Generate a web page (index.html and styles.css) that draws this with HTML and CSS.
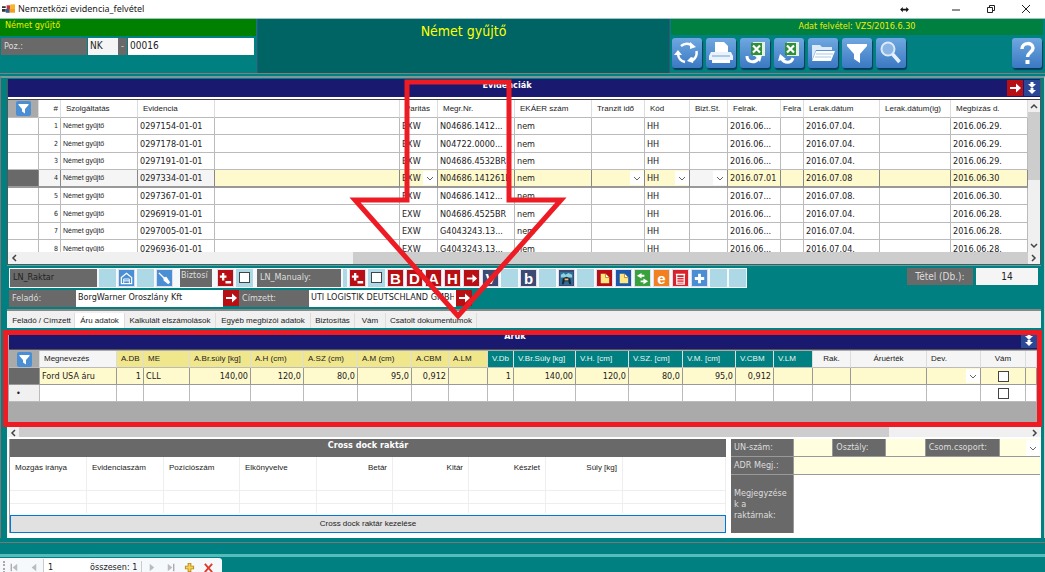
FILE: index.html
```html
<!DOCTYPE html>
<html lang="hu">
<head>
<meta charset="utf-8">
<title>Nemzetközi evidencia_felvétel</title>
<link rel="stylesheet" href="styles.css">
</head>
<body>
<svg class="defs" aria-hidden="true">
  <symbol id="funnel" viewBox="0 0 30 30"><path d="M5 6h20v2l-7 8v9l-6-4v-5L5 8z" fill="#fff"/></symbol>
  <symbol id="go" viewBox="0 0 16 16"><path d="M3 8h8" stroke="#fff" stroke-width="2"/><path d="M9 3.500l5 4.500-5 4.500z" fill="#fff"/></symbol>
  <symbol id="down" viewBox="0 0 16 16"><path d="M8 2v3M8 8v3" stroke="#fff" stroke-width="3"/><path d="M4 4h8L8 8zM4 10h8l-4 4z" fill="#fff"/></symbol>
  <symbol id="plusminus" viewBox="0 0 16 16"><path d="M2 6h7M5.500 2v8M8 12h6" stroke="#fff" stroke-width="2.500"/></symbol>
  <symbol id="excel" viewBox="0 0 30 30"><path d="M13 4h12v14H13z" fill="#e2f2dc"/><path d="M11 5h11v12H11z" fill="#2f8f3c"/><path d="M13 7.500l7 7M20 7.500l-7 7" stroke="#fff" stroke-width="2.200"/></symbol>
</svg>

<header class="titlebar">
  <svg class="app-icon" viewBox="0 0 14 12"><path d="M0 3h4v2H0zM0 6h4v3H0z" fill="#333"/><path d="M5 2h4v4H5z" fill="#c33"/><path d="M9 1h5v5H9z" fill="#f7b52c"/><path d="M5 6h9v4H5z" fill="#f0a020"/><path d="M4 6h4v4H4z" fill="#345da8"/></svg>
  <h1>Nemzetközi evidencia_felvétel</h1>
  <svg class="dots" viewBox="0 0 10 8"><path d="M0 4l3-3v2h4V1l3 3-3 3V5H3v2z" fill="#111"/></svg>
  <button class="win" aria-label="Kis méret"><svg viewBox="0 0 10 10"><path d="M1 6h8" stroke="#222"/></svg></button>
  <button class="win" aria-label="Előző méret"><svg viewBox="0 0 10 10"><path d="M1.500 3.500h5v5h-5zM3.500 3V1.500h5v5H7" fill="none" stroke="#222"/></svg></button>
  <button class="win" aria-label="Bezárás"><svg viewBox="0 0 10 10"><path d="M1 1l8 8M9 1L1 9" stroke="#222"/></svg></button>
</header>

<section class="top">
  <div class="top-left">
    <div class="kind">Német gyűjtő</div>
    <div class="poz">
      <label class="tag" for="poz1">Poz.:</label>
      <input id="poz1" class="poz-a" value="NK">
      <span class="dash">-</span>
      <input class="poz-b" aria-label="Pozíciószám" value="00016">
    </div>
  </div>
  <div class="top-mid">Német gyűjtő</div>
  <div class="top-right">
    <div class="stamp">Adat felvétel: VZS/2016.6.30</div>
    <div class="tools">
      <button class="tool" aria-label="Frissítés"><svg viewBox="0 0 30 30"><g fill="none" stroke="#fff" stroke-width="2.500"><path d="M9 8a9 9 0 0 1 10-1"/><path d="M24.500 13a9.500 9.500 0 0 1-5 10"/><path d="M13 24a9 9 0 0 1-7-8"/></g><path d="M18 4l6 5-6 2zM22 20l-1 5-6-2 4-4zM2 17l4-5 4 5z" fill="#fff"/></svg></button>
      <button class="tool" aria-label="Nyomtatás"><svg viewBox="0 0 30 30"><path d="M9 4h9l4 4v6H9z" fill="#fff"/><path d="M5 14h20l2 4v4H3v-4z" fill="#eaf2fb"/><path d="M6 18h18" stroke="#6fa0d6"/><path d="M6 22h18v3H6z" fill="#fff"/></svg></button>
      <button class="tool" aria-label="Excel betöltés"><svg viewBox="0 0 30 30"><use href="#excel"/><path d="M7 18c0 7 8 7 11 3" fill="none" stroke="#fff" stroke-width="3"/><path d="M15 18l7-1-2 7z" fill="#fff"/></svg></button>
      <button class="tool" aria-label="Excel mentés"><svg viewBox="0 0 30 30"><use href="#excel"/><path d="M19 20c-2 6-9 5-11 1" fill="none" stroke="#fff" stroke-width="3"/><path d="M4 23l2-7 6 5z" fill="#fff"/></svg></button>
      <button class="tool" aria-label="Megnyitás"><svg viewBox="0 0 30 30"><path d="M4 22V7h8l2 2h10v3H8z" fill="#dceaf8"/><path d="M8 13h19l-4 10H4z" fill="#fff"/><path d="M8 16h17M7 19h16" stroke="#a8c9ea"/></svg></button>
      <button class="tool" aria-label="Szűrés"><svg><use href="#funnel"/></svg></button>
      <button class="tool" aria-label="Keresés"><svg viewBox="0 0 30 30"><circle cx="12" cy="11" r="6.500" fill="#8ab6e6" stroke="#dbe9f8" stroke-width="2"/><path d="M16.500 16l7 8" stroke="#e8f1fb" stroke-width="3.500"/></svg></button>
      <button class="tool help" aria-label="Súgó"><svg viewBox="0 0 30 30"><path d="M10 11c0-7 11-7 11-1 0 4-5.500 4.500-5.500 9" fill="none" stroke="#fff" stroke-width="3.500"/><path d="M13.500 22h4v4h-4z" fill="#fff"/></svg></button>
    </div>
  </div>
</section>

<main>
  <section class="grid-panel">
    <div class="bar"><h2>Evidenciák</h2>
      <button class="sq red" aria-label="Ugrás"><svg><use href="#go"/></svg></button>
      <button class="sq navy" aria-label="Lenyitás"><svg><use href="#down"/></svg></button>
    </div>
    <div class="scrollbox">
      <div class="clip">
      <table class="ev">
        <colgroup><col class="w31"><col class="w22"><col class="w77"><col class="w77"><col><col class="w38"><col class="w77"><col class="w77"><col class="w53"><col class="w45"><col class="w38"><col class="w53"><col class="w23"><col class="w76"><col class="w71"><col class="w77"></colgroup>
        <thead><tr><th class="corner"><button class="filter" aria-label="Szűrő"><svg><use href="#funnel"/></svg></button></th><th class="n">#</th><th>Szolgáltatás</th><th>Evidencia</th><th></th><th>Paritás</th><th>Megr.Nr.</th><th>EKÁER szám</th><th>Tranzit idő</th><th>Kód</th><th>Bizt.St.</th><th>Felrak.</th><th class="tight">Felra</th><th>Lerak.dátum</th><th>Lerak.dátum(ig)</th><th>Megbízás d.</th></tr></thead>
        <tbody>
        <tr><td></td><td class="n">1</td><td class="s">Német gyűjtő</td><td>0297154-01-01</td><td></td><td>EXW</td><td>N04686.1412...</td><td>nem</td><td></td><td>HH</td><td></td><td>2016.06...</td><td></td><td>2016.07.04.</td><td></td><td>2016.06.29.</td></tr>
        <tr><td></td><td class="n">2</td><td class="s">Német gyűjtő</td><td>0297178-01-01</td><td></td><td>EXW</td><td>N04722.0000...</td><td>nem</td><td></td><td>HH</td><td></td><td>2016.06...</td><td></td><td>2016.07.04.</td><td></td><td>2016.06.29.</td></tr>
        <tr><td></td><td class="n">3</td><td class="s">Német gyűjtő</td><td>0297191-01-01</td><td></td><td>EXW</td><td>N04686.4532BR</td><td>nem</td><td></td><td>HH</td><td></td><td>2016.06...</td><td></td><td>2016.07.04.</td><td></td><td>2016.06.29.</td></tr>
        <tr class="current"><td class="mark"></td><td class="n ro">4</td><td class="s ro">Német gyűjtő</td><td class="ro">0297334-01-01</td><td></td><td class="pick"><select aria-label="Paritás"><option>EXW</option></select></td><td>N04686.141261B</td><td>nem</td><td class="pick"><select aria-label="Tranzit idő"><option></option></select></td><td class="pick"><select aria-label="Kód"><option>HH</option></select></td><td class="pick ro"><select aria-label="Bizt.St."><option></option></select></td><td>2016.07.01</td><td></td><td>2016.07.08</td><td></td><td>2016.06.30</td></tr>
        <tr><td></td><td class="n">5</td><td class="s">Német gyűjtő</td><td>0297367-01-01</td><td></td><td>EXW</td><td>N04686.1412...</td><td>nem</td><td></td><td>HH</td><td></td><td>2016.07...</td><td></td><td>2016.07.08.</td><td></td><td>2016.06.30.</td></tr>
        <tr><td></td><td class="n">6</td><td class="s">Német gyűjtő</td><td>0296919-01-01</td><td></td><td>EXW</td><td>N04686.4525BR</td><td>nem</td><td></td><td>HH</td><td></td><td>2016.06...</td><td></td><td>2016.07.04.</td><td></td><td>2016.06.28.</td></tr>
        <tr><td></td><td class="n">7</td><td class="s">Német gyűjtő</td><td>0297005-01-01</td><td></td><td>EXW</td><td>G4043243.13...</td><td>nem</td><td></td><td>HH</td><td></td><td>2016.06...</td><td></td><td>2016.07.04.</td><td></td><td>2016.06.28.</td></tr>
        <tr><td></td><td class="n">8</td><td class="s">Német gyűjtő</td><td>0296936-01-01</td><td></td><td>EXW</td><td>G4043243.13...</td><td>nem</td><td></td><td>HH</td><td></td><td>2016.06...</td><td></td><td>2016.07.04.</td><td></td><td>2016.06.28.</td></tr>
        </tbody>
      </table>
      </div>
      <div class="vscroll"><svg viewBox="0 0 12 12"><path d="M3 8l3-3 3 3" fill="none" stroke="#444" stroke-width="1.500"/></svg><i></i><svg viewBox="0 0 12 12"><path d="M3 4l3 3 3-3" fill="none" stroke="#444" stroke-width="1.500"/></svg></div>
    </div>
    <div class="hscroll one"><svg viewBox="0 0 12 12"><path d="M8 3L5 6l3 3" fill="none" stroke="#444" stroke-width="1.500"/></svg><i></i><svg viewBox="0 0 12 12"><path d="M4 3l3 3-3 3" fill="none" stroke="#444" stroke-width="1.500"/></svg></div>
  </section>

  <section class="mid">
    <div class="strip-row">
      <div class="strip">
        <span class="tag dark w87">LN_Raktar</span>
        <span class="cell"></span>
        <button class="cell blue" aria-label="Raktár"><svg viewBox="0 0 16 16"><path d="M2.500 7L8 2.500 13.500 7v6.500h-11z" fill="none" stroke="#fff" stroke-width="1.300"/><path d="M5 13V8.500h6V13M5 10.500h6" fill="none" stroke="#fff"/></svg></button>
        <span class="cell"></span>
        <button class="cell blue" aria-label="Törlés"><svg viewBox="0 0 16 16"><path d="M2 2l6 6" stroke="#fff" stroke-width="1.500"/><path d="M7 7l3-1 4 6-2 2-5-4z" fill="#fff"/></svg></button>
        <span class="tag w32">Biztosí</span>
        <button class="cell red" aria-label="Biztosítás"><svg><use href="#plusminus"/></svg></button>
        <span class="cell"><input type="checkbox" aria-label="Biztosítva"></span>
        <span class="tag w84">LN_Manualy:</span>
        <span class="cell thin"></span>
        <button class="cell red" aria-label="Manuális"><svg><use href="#plusminus"/></svg></button>
        <span class="cell"><input type="checkbox" aria-label="Manuálisan"></span>
        <button class="cell red">B</button>
        <button class="cell red">D</button>
        <button class="cell red">A</button>
        <button class="cell red">H</button>
        <button class="cell red" aria-label="Tovább"><svg><use href="#go"/></svg></button>
        <button class="cell slate">V</button>
        <span class="cell"></span>
        <button class="cell slate">b</button>
        <span class="cell"></span>
        <button class="cell slate" aria-label="Jármű"><svg viewBox="0 0 16 16"><path d="M1 1h14v14H1z" fill="#2d6e96"/><path d="M2 4l3-2 2 2 3-2 4 2v3H2z" fill="#8ed0e0"/><path d="M3 14l1-6 4-2 4 2 1 6h-2l-1-3H6l-1 3z" fill="#162838"/><path d="M6 8h4v2H6z" fill="#f4b36a"/></svg></button>
        <span class="cell"></span>
        <button class="cell red" aria-label="Jegyzet"><svg viewBox="0 0 16 16"><path d="M4 3h5l4 4v6H4z" fill="#ffe680"/><path d="M9 3v4h4" fill="#fff" stroke="#b98c20"/></svg></button>
        <button class="cell royal" aria-label="Másolat"><svg viewBox="0 0 16 16"><path d="M4 3h5l4 4v6H4z" fill="#ffe680"/><path d="M9 3v4h4" fill="#fff" stroke="#b98c20"/></svg></button>
        <button class="cell green" aria-label="Csere"><svg viewBox="0 0 16 16"><path d="M7 2l-5 3 5 3V6h3V4H7zM9 8l5 3-5 3v-2H6v-2h3z" fill="#fff"/></svg></button>
        <button class="cell orange">e</button>
        <button class="cell crimson" aria-label="Kosár"><svg viewBox="0 0 16 16"><path d="M4 4h8v10H4zM3 3.500h10" fill="none" stroke="#fff" stroke-width="1.300"/><path d="M4 7h8M4 9.500h8M4 12h8" stroke="#fff"/></svg></button>
        <button class="cell blue" aria-label="Új"><svg viewBox="0 0 16 16"><path d="M8 3v10M3 8h10" stroke="#fff" stroke-width="3"/></svg></button>
        <span class="cell"></span>
        <span class="cell"></span>
      </div>
      <div class="count"><label class="tag" for="tetel">Tétel (Db.):</label><input id="tetel" value="14"></div>
    </div>
    <div class="parties">
      <label class="tag w67" for="felado">Feladó:</label><input id="felado" value="BorgWarner Oroszlány Kft"><button class="sq red" aria-label="Feladó megnyitása"><svg><use href="#go"/></svg></button>
      <label class="tag w70" for="cimzett">Címzett:</label><input id="cimzett" value="UTI LOGISTIK DEUTSCHLAND GMBH"><button class="sq red" aria-label="Címzett megnyitása"><svg><use href="#go"/></svg></button>
    </div>
  </section>

  <nav class="tabs"><button class="t66">Feladó / Címzett</button><button class="t50 on">Áru adatok</button><button class="t91">Kalkulált elszámolások</button><button class="t95">Egyéb megbízói adatok</button><button class="t44">Biztosítás</button><button class="t31">Vám</button><button class="t91">Csatolt dokumentumok</button></nav>

  <section class="goods">
    <div class="bar"><h2>Áruk</h2><button class="sq navy" aria-label="Lenyitás"><svg><use href="#down"/></svg></button></div>
    <table class="aru">
      <colgroup><col class="w31"><col><col class="w27"><col class="w46"><col class="w61"><col class="w53"><col class="w54"><col class="w54"><col class="w37"><col class="w39"><col class="w26"><col class="w62"><col class="w53"><col class="w54"><col class="w53"><col class="w38"><col class="w39"><col class="w38"><col class="w76"><col class="w54"><col class="w45"><col class="w11"></colgroup>
      <thead><tr><th class="corner"><button class="filter" aria-label="Szűrő"><svg><use href="#funnel"/></svg></button></th><th>Megnevezés</th><th class="k">A.DB</th><th class="k">ME</th><th class="k">A.Br.súly [kg]</th><th class="k">A.H (cm)</th><th class="k">A.SZ (cm)</th><th class="k">A.M (cm)</th><th class="k">A.CBM</th><th class="k">A.LM</th><th class="v">V.Db</th><th class="v">V.Br.Súly [kg]</th><th class="v">V.H. [cm]</th><th class="v">V.SZ. [cm]</th><th class="v">V.M. [cm]</th><th class="v">V.CBM</th><th class="v">V.LM</th><th class="c">Rak.</th><th class="c">Áruérték</th><th>Dev.</th><th class="c">Vám</th><th></th></tr></thead>
      <tbody>
      <tr class="filled"><td class="mark"></td><td>Ford USA áru</td><td class="r">1</td><td>CLL</td><td class="r">140,00</td><td class="r">120,0</td><td class="r">80,0</td><td class="r">95,0</td><td class="r">0,912</td><td></td><td class="r">1</td><td class="r">140,00</td><td class="r">120,0</td><td class="r">80,0</td><td class="r">95,0</td><td class="r">0,912</td><td></td><td></td><td></td><td class="pick"><select aria-label="Deviza"><option></option></select></td><td class="c"><input type="checkbox" aria-label="Vám"></td><td></td></tr>
      <tr><td class="new">•</td><td></td><td></td><td></td><td></td><td></td><td></td><td></td><td></td><td></td><td></td><td></td><td></td><td></td><td></td><td></td><td></td><td></td><td></td><td></td><td class="c"><input type="checkbox" aria-label="Vám, új sor"></td><td></td></tr>
      </tbody>
    </table>
  </section>
  <div class="hscroll two"><svg viewBox="0 0 12 12"><path d="M8 3L5 6l3 3" fill="none" stroke="#444" stroke-width="1.500"/></svg><i></i><svg viewBox="0 0 12 12"><path d="M4 3l3 3-3 3" fill="none" stroke="#444" stroke-width="1.500"/></svg></div>

  <section class="lower">
    <div class="dock">
      <h2>Cross dock raktár</h2>
      <table>
        <colgroup><col class="w77"><col class="w77"><col class="w76"><col class="w77"><col class="w76"><col class="w76"><col class="w77"><col class="w77"><col></colgroup>
        <thead><tr><th>Mozgás iránya</th><th>Evidenciaszám</th><th>Pozíciószám</th><th>Elkönyvelve</th><th class="r">Betár</th><th class="r">Kitár</th><th class="r">Készlet</th><th class="r">Súly [kg]</th><th></th></tr></thead>
        <tbody>
        <tr><td></td><td></td><td></td><td></td><td></td><td></td><td></td><td></td><td></td></tr>
        <tr><td></td><td></td><td></td><td></td><td></td><td></td><td></td><td></td><td></td></tr>
        <tr><td></td><td></td><td></td><td></td><td></td><td></td><td></td><td></td><td></td></tr>
        </tbody>
      </table>
      <button class="manage">Cross dock raktár kezelése</button>
    </div>
    <div class="adr">
      <div class="line"><label class="tag w62" for="un">UN-szám:</label><input id="un"><label class="tag w52" for="oszt">Osztály:</label><input id="oszt"><label class="tag w73" for="csom">Csom.csoport:</label><select id="csom"><option></option></select></div>
      <div class="line"><label class="tag w62" for="adr">ADR Megj.:</label><input id="adr"></div>
      <div class="line tall"><label class="tag w62" for="megj">Megjegyzések a raktárnak:</label><textarea id="megj"></textarea></div>
    </div>
  </section>
</main>

<footer>
  <div class="band"></div>
  <div class="pager">
    <span class="grip"></span>
    <button aria-label="Első"><svg viewBox="0 0 12 12"><path d="M2.500 2v8" stroke="#aaa" stroke-width="1.500"/><path d="M9 2v8L4 6z" fill="#bbb"/></svg></button>
    <button aria-label="Előző"><svg viewBox="0 0 12 12"><path d="M9 2v8L4 6z" fill="#bbb"/></svg></button>
    <input aria-label="Oldal" value="1">
    <span class="sum">összesen: 1</span>
    <button aria-label="Következő"><svg viewBox="0 0 12 12"><path d="M4 2v8l5-4z" fill="#bbb"/></svg></button>
    <button aria-label="Utolsó"><svg viewBox="0 0 12 12"><path d="M9.500 2v8" stroke="#aaa" stroke-width="1.500"/><path d="M3 2v8l5-4z" fill="#bbb"/></svg></button>
    <button class="sep" aria-label="Hozzáadás"><svg viewBox="0 0 12 12"><path d="M6 1v10M1 6h10" stroke="#b98a1c" stroke-width="4"/><path d="M6 2v8M2 6h8" stroke="#f6cf55" stroke-width="2"/></svg></button>
    <button aria-label="Eltávolítás"><svg viewBox="0 0 12 12"><path d="M2 2l8 9M10 2L2 11" stroke="#e0392b" stroke-width="2"/></svg></button>
  </div>
</footer>

<svg class="arrow" viewBox="0 0 220 250" aria-hidden="true"><path d="M58 125V7h102v118h52L109 241 6 125z" fill="none" stroke="#ed1c24" stroke-width="5"/></svg>
</body>
</html>
```
FILE: styles.css
```css
:root {
  --teal: #008080;
  --gray: #696969;
  --navy: #191970;
  --cream: #fffacd;
  --mark: #ed1c24;
  --text: "DejaVu Sans Condensed", "DejaVu Sans", sans-serif;
  --small: "Liberation Sans", Arial, sans-serif;
}
* { box-sizing: border-box; }
body {
  margin: 0;
  min-height: 100vh;
  display: flex;
  flex-direction: column;
  background: var(--teal);
  color: #222;
  font: 9px/12px var(--text);
  position: relative;
  overflow: hidden;
}
button, input, select, textarea { font: inherit; color: inherit; margin: 0; padding: 0; border: 0; border-radius: 0; min-width: 0; }
h1, h2 { margin: 0; font: inherit; }
svg { display: block; }
.defs { position: absolute; width: 0; height: 0; }

.titlebar { display: flex; align-items: center; height: 19px; padding: 0 14px 0 2px; background: #fff; border-bottom: 1px solid #9cc4c4; }
.titlebar h1 { margin: 0 auto 0 3px; font: 9px/12px "Noto Sans", sans-serif; }
.app-icon { width: 13px; height: 12px; }
.dots { width: 9px; height: 7px; margin-right: 42px; }
.win { background: none; width: 10px; margin-left: 25px; }
.dots + .win { margin-left: 0; }
.win svg { width: 10px; height: 10px; }

.top { display: grid; grid-template-columns: 256px 1fr 372px; column-gap: 1px; height: 55px; padding-right: 2px; border-bottom: 1px solid #808080; }
.kind { height: 17px; padding: 0 5px; background: #008000; color: #ee0; }
.poz { display: flex; padding: 2px 2px 0 1px; }
.poz .tag { width: 86px; }
.tag { background: var(--gray); color: #ddd; font: 9px/17px var(--text); padding: 0 3px; white-space: nowrap; overflow: hidden; }
.poz input { height: 17px; background: #f5f5f5; padding: 0 2px 3px; font-size: 10px; }
.poz-a { width: 30px; margin-left: 1px; }
.dash { width: 9px; text-align: center; background: var(--gray); color: #ddd; line-height: 17px; margin-right: 1px; }
.poz .poz-b { flex: 1; background: #fff; }
.top-mid { background: #006464; border-left: 1px solid #357; border-right: 1px solid #357; color: #ff0; font-size: 14px; line-height: 24px; text-align: center; }
.stamp { height: 16px; background: #008040; color: #ee0; line-height: 15px; text-align: center; }
.tools { display: flex; gap: 4px; padding: 3px 1px 0; }
.tool { width: 30px; height: 30px; border-radius: 3px; background: linear-gradient(#6fa8e0, #3a78c2); box-shadow: 1px 2px 1px #063c5c; }
.tool svg { width: 30px; height: 30px; }
.help { margin-left: auto; }

main { margin-top: 2px; padding: 1px 3px 0 6px; border-top: 2px solid #799; border-left: 1px solid #777; border-right: 1px solid #ccc; }
.bar { display: flex; align-items: center; background: var(--navy); color: #fff; height: 18px; }
.bar h2 { flex: 1; align-self: flex-start; text-align: center; font-weight: bold; line-height: 12px; }
.sq { width: 16px; height: 16px; flex: none; }
.sq svg, .cell svg { width: 16px; height: 16px; }
.red { background: #b80f14; color: #fff; }
.navy { background: #2c4796; }
.grid-panel { background: #fff; border: 1px solid #555; border-top: 0; }
.grid-panel .sq { margin-left: 1px; }
.scrollbox { display: flex; border-top: 1px solid #444; margin-top: 2px; height: 153px; }
.clip { flex: 1; overflow: hidden; }
table { border-collapse: separate; border-spacing: 0; table-layout: fixed; width: 100%; }
th, td { padding: 0 2px; font-weight: normal; text-align: left; white-space: nowrap; overflow: hidden; border-right: 1px solid #bbb; border-bottom: 1px solid #bbb; }
th { font: 8px/12px var(--small); padding: 0 5px; background: #fff; border-right-color: #ddd; }
.ev tr { height: 17px; }
.ev tr:nth-child(even) { height: 18px; }
.ev th { height: 18px; }
.ev .n { text-align: right; padding: 0 2px 0 0; font-size: 7px; }
.ev th.n { font-size: 8px; }
.ev th.tight { padding: 0 2px; }
.ev .s { font: 7px/12px var(--small); }
.corner, .ev th.corner, .aru th.corner { background: #aaa; padding: 0 0 0 8px; }
.filter { display: block; width: 15px; height: 15px; background: #4a8fd4; border-radius: 2px; }
.filter svg { width: 15px; height: 15px; }
.current td { background: var(--cream); border-bottom: 2px solid #999; border-right-color: #888; }
.current td.ro { background: #f5f5f5; }
.current td.mark, td.mark { background: var(--gray); }
td.pick { padding: 0; }
select {
  appearance: none;
  display: block;
  width: 100%;
  height: 14px;
  padding-left: 2px;
  background: url("data:image/svg+xml,%3Csvg xmlns='http://www.w3.org/2000/svg' width='14' height='16'%3E%3Cpath d='M0 0h14v16H0z' fill='%23fff'/%3E%3Cpath d='M4 7l3 3 3-3' fill='none' stroke='%23666'/%3E%3C/svg%3E") right center no-repeat var(--cream);
}
.ro select { background-color: #f5f5f5; }
.vscroll { width: 12px; display: flex; flex-direction: column; background: #f0f0f0; }
.vscroll svg, .hscroll svg { width: 12px; height: 12px; flex: none; }
.vscroll i { flex: 0 0 68px; background: #cdcdcd; margin-bottom: auto; }
.hscroll { display: flex; height: 12px; background: #f0f0f0; }
.hscroll i { background: #cdcdcd; }
.one i { flex: 1; margin-left: 333px; }

.mid { padding: 2px 1px 2px 2px; border-top: 1px solid #4aa; }
.strip-row { display: flex; justify-content: space-between; align-items: flex-start; }
.strip { display: flex; gap: 2px; background: #f4f8fa; padding: 1px; height: 20px; }
.cell { width: 17px; height: 18px; flex: none; background: #add8e6; font: bold 15px/17px "Liberation Sans", sans-serif; text-align: center; }
button.cell { border: 1px solid #dde; }
.cell svg { width: 15px; height: 15px; }
.cell.blue { background: #4a8fd4; }
.cell.red { background: #b80f14; }
.cell.slate { background: #3d4a72; color: #fff; }
.cell.royal { background: #1c57a8; }
.cell.green { background: #38a03c; }
.cell.orange { background: #f08020; color: #fff; }
.cell.crimson { background: #d8232c; }
.cell.thin { width: 4px; }
input[type="checkbox"] { appearance: none; display: block; width: 11px; height: 11px; margin: auto; background: #fff; border: 1px solid #444; }
.cell input[type="checkbox"] { margin-top: 3px; }
.strip .w32 { line-height: 12px; margin: 0 3px 0 5px; padding: 0 1px; }
.strip .w84 { margin-left: 2px; }
.strip .dark { color: #222; }
.count { display: flex; gap: 3px; padding-right: 2px; }
.count .tag { width: 66px; text-align: center; font-size: 10px; }
.count input { width: 62px; height: 17px; background: #f5f5f5; text-align: center; font-size: 10px; }
.parties { display: flex; margin-top: 2px; }
.parties input { width: 147px; height: 17px; background: #fff; padding: 0 2px 3px; }

.tabs { display: flex; height: 19px; padding: 2px 0 0 2px; background: #f0f0f0; border-top: 2px solid #888; }
.tabs button { background: #f0f0f0; border-right: 1px solid #ddd; font: 8px/14px var(--small); white-space: nowrap; }
.tabs .on { background: #fff; }

.goods { position: relative; margin-top: 2px; padding: 0 4px 0 2px; height: 97px; background: #aaa; }
.goods::after { content: ""; position: absolute; inset: 0 -1px 0 -4px; border: 5px solid var(--mark); }
.goods .bar { height: 20px; margin-bottom: 1px; border-bottom: 1px solid #555; }
.aru th, .aru tbody tr { height: 17px; }
.aru th { background: #f5f5f5; padding: 0 4px; }
.aru th.k { background: #f0e68c; }
.aru th.v { background: var(--teal); color: #e8f4f4; }
.aru .c { text-align: center; }
.aru td { height: 17px; background: #fff; }
.filled td { background: var(--cream); border-color: #999; }
.aru .filled td { background: var(--cream); }
.aru .filled td.mark { background: var(--gray); }
.aru td.new { background: #f0f0f0; text-align: left; padding-left: 7px; }
.r, .dock th.r { text-align: right; }
.two { height: 10px; }
.two i { flex: 0 0 870px; }
.two svg:last-child { margin-left: auto; }

.lower { display: flex; gap: 5px; padding: 2px 1px 5px 2px; background: #fff; }
.dock { flex: 1; min-width: 0; border-left: 1px solid #999; }
.dock h2 { height: 18px; background: var(--gray); color: #fff; font-weight: bold; line-height: 13px; text-align: center; }
.dock th { height: 21px; border-color: #eee; border-bottom: 0; }
.dock td { height: 13px; border-color: #eee; }
.dock tbody tr:last-child td { height: 9px; border-bottom: 0; }
.manage { display: block; width: 100%; height: 18px; margin-top: 2px; background: #e1e1e1; border: 1px solid #0078d7; font: 8px/14px var(--small); }
.adr { flex: 0 0 309px; min-width: 0; display: flex; flex-direction: column; gap: 1px; background: #999; }
.line { display: flex; gap: 1px; height: 17px; }
.line input, .line select { flex: 1; width: 0; background-color: #ffffe0; }
.line select { height: 17px; }
.line .tag { flex: none; }
.line.tall { flex: 1; height: auto; }
.tall .tag { white-space: normal; overflow-wrap: anywhere; line-height: 11px; display: flex; align-items: center; }
textarea { flex: 1; width: 0; background: #fff; resize: none; }

footer { flex: 1; margin-top: 4px; }
.band { height: 15px; border-top: 1px solid #777; border-bottom: 3px solid #5bb; }
.pager { display: flex; align-items: center; width: 222px; height: 18px; margin-top: 1px; padding-left: 3px; background: #f6f9fb; border-radius: 0 3px 0 0; }
.pager button { width: 19px; background: none; }
.pager svg { width: 11px; height: 11px; margin: auto; }
.pager input { width: 47px; height: 16px; padding-left: 4px; background: #fff; border-left: 1px solid #ccc; }
.sum { width: 52px; white-space: nowrap; border-right: 1px solid #ccc; }
.grip { width: 2px; height: 12px; border-left: 2px dotted #aaa; }
.arrow { position: absolute; left: 349px; top: 75px; width: 220px; height: 250px; pointer-events: none; }

.w11 { width: 11px; } .w22 { width: 22px; } .w23 { width: 23px; } .w26 { width: 26px; } .w27 { width: 27px; } .w31 { width: 31px; } .w32 { width: 32px; }
.w37 { width: 37px; } .w38 { width: 38px; } .w39 { width: 39px; } .w45 { width: 45px; } .w46 { width: 46px; } .w52 { width: 52px; } .w53 { width: 53px; } .w54 { width: 54px; }
.w61 { width: 61px; } .w62 { width: 62px; } .w67 { width: 67px; } .w70 { width: 70px; } .w71 { width: 71px; } .w73 { width: 73px; } .w76 { width: 76px; } .w77 { width: 77px; }
.w84 { width: 84px; } .w87 { width: 87px; }
.t31 { width: 31px; } .t44 { width: 44px; } .t50 { width: 50px; } .t66 { width: 66px; } .t91 { width: 91px; } .t95 { width: 95px; }
```
